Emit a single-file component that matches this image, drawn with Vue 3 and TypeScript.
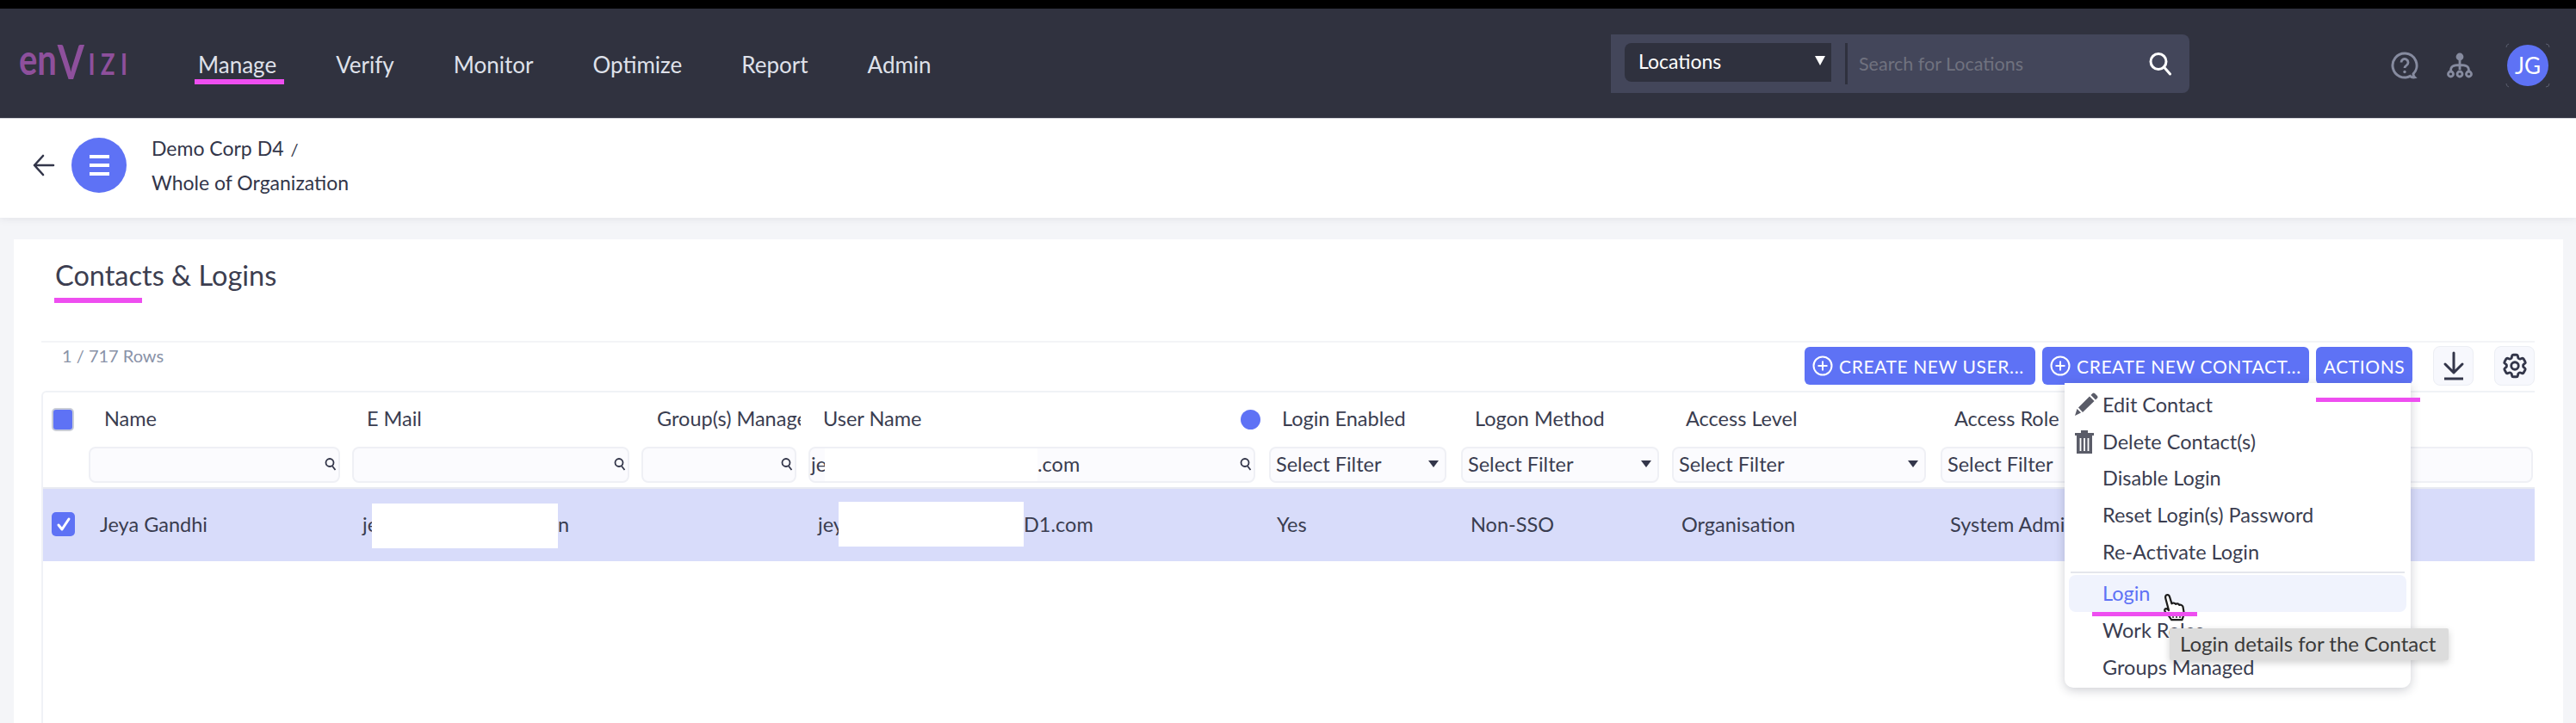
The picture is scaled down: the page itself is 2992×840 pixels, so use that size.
<script setup lang="ts">
const navItems: string[] = ['Manage', 'Verify', 'Monitor', 'Optimize', 'Report', 'Admin']
const menuTop: string[] = ['Disable Login', 'Reset Login(s) Password', 'Re-Activate Login']
</script>

<template>
  <div class="page">
    <div class="blackbar"></div>
    <nav class="nav">
      <svg class="logo" width="132" height="42" viewBox="0 0 132 42">
        <text transform="translate(0 34) scale(0.8 1)" class="logo-text"><tspan class="lower">en</tspan><tspan class="tall" dx="1" dy="5">V</tspan><tspan class="caps" dx="6" dy="-5">IZI</tspan></text>
      </svg>
      <div class="nav-items">
        <a v-for="(n, i) in navItems" :key="n" class="nav-item" :class="{ active: i === 0 }">{{ n }}</a>
      </div>
      <div class="search">
        <div class="loc-select">
          <span>Locations</span>
          <i class="caret white"></i>
        </div>
        <div class="search-div"></div>
        <span class="placeholder">Search for Locations</span>
        <svg class="search-ico" width="28" height="28" viewBox="0 0 28 28" fill="none" stroke="#fff" stroke-width="3" stroke-linecap="round">
          <circle cx="12" cy="11.5" r="9" />
          <path d="M18.5 18l7 8" />
        </svg>
      </div>
      <div class="nav-icons">
        <svg width="32" height="32" viewBox="0 0 32 32" fill="none" stroke="#868b9f" stroke-width="3">
          <path d="M16 2a14 14 0 1 0 6.500 26.400c1.200 1.300 3 1.700 5 1.400-1-1-1.600-2.600-1.500-4A14 14 0 0 0 16 2z" />
          <path d="M12 12.500a4 4 0 1 1 6.200 3.300c-1.500 1-2.200 1.700-2.200 3.200" stroke-width="2.800" />
          <circle cx="16" cy="23.500" r="1.700" fill="#868b9f" stroke="none" />
        </svg>
        <svg class="org" width="30" height="30" viewBox="0 0 30 30" fill="none" stroke="#868b9f" stroke-width="2.800">
          <circle cx="15" cy="5" r="4.400" fill="#868b9f" stroke="none" />
          <path d="M15 8v12M4.500 21c0-5 3-6.500 10.500-6.500s10.500 1.500 10.500 6.500" />
          <circle cx="4.500" cy="25" r="3" />
          <circle cx="15" cy="25" r="3" />
          <circle cx="25.500" cy="25" r="3" />
        </svg>
        <div class="avatar">
          JG
          <svg class="corners" width="52" height="52" viewBox="0 0 52 52" fill="none" stroke="#5a5d6e" stroke-width="1">
            <path d="M1 5a4 4 0 0 1 3-4M47 1a4 4 0 0 1 4 4M51 47a4 4 0 0 1-4 4M4 51a4 4 0 0 1-3-4" />
          </svg>
        </div>
      </div>
    </nav>

    <header class="crumbs">
      <svg class="back" width="26" height="26" viewBox="0 0 26 26" fill="none" stroke="#33364a" stroke-width="2.600" stroke-linecap="round" stroke-linejoin="round">
        <path d="M24 13H2M12 2L2 13l10 11" />
      </svg>
      <div class="crumb-btn">
        <span></span><span></span><span></span>
      </div>
      <div class="crumb-text">
        <div>Demo Corp D4 <span class="slash">/</span></div>
        <div>Whole of Organization</div>
      </div>
    </header>

    <main class="main">
      <section class="card">
        <div class="title-wrap">
          <h1 class="title">Contacts &amp; Logins</h1>
        </div>
        <div class="toolbar">
          <span class="count">1 / 717 Rows</span>
          <div class="tools">
            <button class="btn w-user">
              <svg width="24" height="24" viewBox="0 0 24 24" fill="none" stroke="#fff" stroke-width="2"><circle cx="12" cy="12" r="10.500" /><path d="M12 6.500v11M6.500 12h11" /></svg>
              CREATE NEW USER...
            </button>
            <button class="btn w-contact">
              <svg width="24" height="24" viewBox="0 0 24 24" fill="none" stroke="#fff" stroke-width="2"><circle cx="12" cy="12" r="10.500" /><path d="M12 6.500v11M6.500 12h11" /></svg>
              CREATE NEW CONTACT...
            </button>
            <button class="btn w-actions">ACTIONS</button>
            <button class="icon-btn dl">
              <svg width="28" height="34" viewBox="0 0 28 34" fill="none" stroke="#33364a" stroke-width="3" stroke-linecap="round" stroke-linejoin="round">
                <path d="M14 2v23M4 15l10 10 10-10" /><path d="M3 32h22" stroke-linecap="butt" />
              </svg>
            </button>
            <button class="icon-btn">
              <svg width="34" height="34" viewBox="0 0 24 24" fill="none" stroke="#33364a" stroke-width="2" stroke-linejoin="round">
                <circle cx="12" cy="12" r="3" />
                <path d="M9.594 3.940c.09-.542.56-.94 1.110-.94h2.593c.55 0 1.020.398 1.110.94l.213 1.281c.063.374.313.686.645.870.074.04.147.083.22.127.324.196.72.257 1.075.124l1.217-.456a1.125 1.125 0 011.370.49l1.296 2.247a1.125 1.125 0 01-.26 1.431l-1.003.827c-.293.24-.438.613-.431.992a6.759 6.759 0 010 .255c-.007.378.138.75.43.99l1.005.828c.424.35.534.954.26 1.430l-1.298 2.247a1.125 1.125 0 01-1.369.491l-1.217-.456c-.355-.133-.75-.072-1.076.124a6.570 6.570 0 01-.22.128c-.331.183-.581.495-.644.869l-.213 1.280c-.09.543-.56.941-1.110.941h-2.594c-.55 0-1.020-.398-1.110-.94l-.213-1.281c-.062-.374-.312-.686-.644-.87a6.520 6.520 0 01-.22-.127c-.325-.196-.72-.257-1.076-.124l-1.217.456a1.125 1.125 0 01-1.369-.49l-1.297-2.247a1.125 1.125 0 01.26-1.431l1.004-.827c.292-.24.437-.613.43-.992a6.932 6.932 0 010-.255c.007-.378-.138-.75-.43-.99l-1.004-.828a1.125 1.125 0 01-.26-1.430l1.297-2.247a1.125 1.125 0 011.370-.491l1.216.456c.356.133.751.072 1.076-.124.072-.044.146-.087.22-.128.332-.183.582-.495.644-.869l.214-1.281z" />
              </svg>
            </button>
          </div>
        </div>

        <div class="table">
          <div class="grid head">
            <div class="cell"><i class="hcheck"></i></div>
            <div class="cell hname">Name</div>
            <div class="cell hemail">E Mail</div>
            <div class="cell hgroup"><span class="clip">Group(s) Managed</span></div>
            <div class="cell huser">
              <span>User Name</span>
              <i class="dot"></i>
            </div>
            <div class="cell hlogin">Login Enabled</div>
            <div class="cell hmethod">Logon Method</div>
            <div class="cell hlevel">Access Level</div>
            <div class="cell hrole">Access Role</div>
          </div>
          <div class="grid filters">
            <div></div>
            <div class="field f-name"><svg class="mini" width="14" height="16" viewBox="0 0 14 16" fill="none" stroke="#33364a" stroke-width="1.800"><circle cx="6" cy="6.500" r="4.500" /><path d="M9 10.500l3.500 4.500" /></svg></div>
            <div class="field f-email"><svg class="mini" width="14" height="16" viewBox="0 0 14 16" fill="none" stroke="#33364a" stroke-width="1.800"><circle cx="6" cy="6.500" r="4.500" /><path d="M9 10.500l3.500 4.500" /></svg></div>
            <div class="field f-group"><svg class="mini" width="14" height="16" viewBox="0 0 14 16" fill="none" stroke="#33364a" stroke-width="1.800"><circle cx="6" cy="6.500" r="4.500" /><path d="M9 10.500l3.500 4.500" /></svg></div>
            <div class="field f-user">
              <span>jey</span><span class="dotcom">.com</span>
              <i class="redact r-filter"></i>
              <svg class="mini" width="14" height="16" viewBox="0 0 14 16" fill="none" stroke="#33364a" stroke-width="1.800"><circle cx="6" cy="6.500" r="4.500" /><path d="M9 10.500l3.500 4.500" /></svg>
            </div>
            <div class="field sel f-login"><span>Select Filter</span><i class="caret"></i></div>
            <div class="field sel f-method"><span>Select Filter</span><i class="caret"></i></div>
            <div class="field sel f-level"><span>Select Filter</span><i class="caret"></i></div>
            <div class="field sel f-role"><span>Select Filter</span></div>
          </div>
          <div class="grid row">
            <div class="cell"><i class="rcheck"><svg width="18" height="18" viewBox="0 0 18 18" fill="none" stroke="#fff" stroke-width="3" stroke-linecap="round" stroke-linejoin="round"><path d="M3 10l4 5 8-12" /></svg></i></div>
            <div class="cell rname">Jeya Gandhi</div>
            <div class="cell remail">je<i class="redact r-email"></i><span class="tail-n">n</span></div>
            <div class="cell"></div>
            <div class="cell ruser">jey<i class="redact r-user"></i><span class="tail-d">D1.com</span></div>
            <div class="cell rlogin">Yes</div>
            <div class="cell rmethod">Non-SSO</div>
            <div class="cell rlevel">Organisation</div>
            <div class="cell rrole">System Admin</div>
          </div>
        </div>

        <div class="actions-mark"></div>
        <div class="menu">
          <div class="mi">
            <svg class="mi-ico" width="28" height="28" viewBox="0 0 28 28"><path d="M1 27l2.500-8L8 23.500z" fill="#5a5c68" /><path d="M5 17.500L18 4.500l5.500 5.500L10 23z" fill="#5a5c68" /><path d="M19.500 3l2-2a2 2 0 0 1 2.500 0l3 3a2 2 0 0 1 0 2.500l-2 2z" fill="#5a5c68" /></svg>
            Edit Contact
          </div>
          <div class="mi">
            <svg class="mi-ico" width="24" height="30" viewBox="0 0 24 30"><path d="M1 5h22v3H1zM8 2h8v3H8z" fill="#5a5c68" /><path d="M3 8h18v21H3z" fill="#5a5c68" /><path d="M7.500 11v15M12 11v15M16.500 11v15" stroke="#fff" stroke-width="1.800" /></svg>
            Delete Contact(s)
          </div>
          <div v-for="m in menuTop" :key="m" class="mi">{{ m }}</div>
          <div class="mi-sep"></div>
          <div class="mi hl">Login</div>
          <div class="mi">Work Roles</div>
          <div class="mi">Groups Managed</div>
        </div>
        <svg class="hand" width="32" height="34" viewBox="0 0 32 34" fill="#fff" stroke="#1c1c1c" stroke-width="2.200" stroke-linejoin="round">
          <path d="M6 2.500c1.800-1 3.400 0 4 1.800l2.500 8c.8-1.200 3.800-1 4.500.6 1-1 3.600-.8 4.200 1 1.200-.6 3.800 0 4.300 2.200l1 6c.5 3-.5 5-2 9H12c-1.500-3-4-6-7-9-1.500-2-.8-4 1-4 1 0 2.200.8 3 2L5.500 7c-.6-2-.6-3.600.5-4.500z" />
          <path d="M14 24v5M18 24v5M22 24v5" stroke-width="1.400" />
        </svg>
        <div class="login-mark"></div>
        <div class="tooltip">Login details for the Contact</div>
      </section>
    </main>
  </div>
</template>

<style>
html, body { margin: 0; padding: 0; background: #f4f5f8; }
</style>

<style scoped>
* { box-sizing: border-box; }
.page {
  width: 2992px;
  height: 840px;
  overflow: hidden;
  background: #f4f5f8;
  font-family: "Lato", "Open Sans", sans-serif;
  color: #3a3d50;
  font-size: 23.500px;
}
.blackbar { height: 10px; background: #000; }
.nav {
  height: 128px;
  background: #30323f;
  display: flex;
  align-items: flex-start;
  border-bottom: 1px solid #d8d9de;
  position: relative;
}
.logo { margin: 43px 0 0 22px; flex: none; overflow: visible; }
.logo-text { font-family: "Lato", sans-serif; font-weight: 700; fill: #8e509c; }
.lower { font-size: 50px; }
.tall { font-size: 56px; }
.caps { font-size: 34px; letter-spacing: 8px; }
.nav-items { display: flex; margin-left: 76px; flex: none; }
.nav-item {
  color: #dfe1ea;
  font-size: 26px;
  padding: 49px 0 0;
  height: 98px;
  margin-right: 69px;
  position: relative;
}
.nav-item.active::after {
  content: "";
  position: absolute;
  left: -4px;
  width: 104px;
  top: 82px;
  height: 6px;
  background: #ee4ef0;
}
.search {
  position: absolute;
  left: 1871px;
  top: 30px;
  width: 672px;
  height: 68px;
  background: #43465a;
  border-radius: 0 8px 8px 0;
  display: flex;
  align-items: flex-start;
}
.loc-select {
  margin: 10px 0 0 16px;
  width: 240px;
  height: 45px;
  background: #2f313e;
  border-radius: 8px 0 0 8px;
  color: #fff;
  font-size: 23px;
  display: flex;
  align-items: center;
  justify-content: space-between;
  padding: 0 7px 4px 16px;
}
.search-div { width: 3px; height: 48px; background: #2f313e; margin: 10px 0 0 16px; }
.placeholder { color: #70727f; font-size: 21.500px; margin: 21px 0 0 13px; flex: 1; }
.search-ico { margin: 20px 20px 0 0; }
.nav-icons {
  position: absolute;
  left: 2777px;
  top: 42px;
  display: flex;
  align-items: center;
}
.org { margin-left: 33px; }
.avatar {
  width: 48px;
  height: 48px;
  border-radius: 50%;
  background: #5e72f5;
  color: #fff;
  font-size: 26px;
  display: flex;
  align-items: center;
  justify-content: center;
  margin-left: 40px;
  position: relative;
}
.corners { position: absolute; left: -2px; top: -2px; }
.caret { width: 0; height: 0; border: 6px solid transparent; border-top: 8px solid #33364a; border-bottom: 0; display: block; }
.caret.white { border-top-color: #fff; border-left-width: 6px; border-right-width: 6px; border-top-width: 11px; }

.crumbs {
  height: 115px;
  background: #fff;
  display: flex;
  align-items: center;
  padding: 0 0 8px 38px;
  box-shadow: 0 2px 8px rgba(50, 55, 80, 0.08);
  position: relative;
}
.back { flex: none; }
.crumb-btn {
  width: 64px;
  height: 64px;
  border-radius: 50%;
  background: #5e72f5;
  margin-left: 19px;
  display: flex;
  flex-direction: column;
  align-items: center;
  justify-content: center;
  gap: 6px;
}
.crumb-btn span { width: 23px; height: 4px; background: #fff; }
.crumb-text { margin-left: 29px; display: flex; flex-direction: column; gap: 9px; line-height: 30px; color: #33364a; font-size: 23px; }
.slash { margin-left: 2px; font-size: 20px; }

.main { padding: 25px 15px 0 16px; }
.card {
  background: #fff;
  height: 562px;
  padding: 0 33px 0 32px;
  position: relative;
}
.title-wrap { height: 118px; padding: 0 0 0 16px; }
.title {
  margin: 0;
  display: inline-block;
  font-weight: 400;
  font-size: 32.500px;
  color: #3c3e50;
  line-height: 42px;
  padding-top: 21px;
}
.title::after {
  content: "";
  display: block;
  width: 102px;
  height: 6px;
  background: #ee4ef0;
  margin: 5px 0 0 -1px;
}
.toolbar {
  border-top: 2px solid #f3f4f7;
  height: 58px;
  display: flex;
  align-items: flex-start;
  justify-content: space-between;
}
.count { color: #8a93a8; font-size: 20px; margin: 1px 0 0 24px; line-height: 28px; }
.tools { display: flex; align-items: flex-start; margin-top: 5px; }
.btn {
  border: 0;
  height: 44px;
  border-radius: 6px;
  background: #5e72f5;
  color: #fff;
  font-family: inherit;
  font-size: 21px;
  letter-spacing: 0.600px;
  display: flex;
  align-items: center;
  gap: 7px;
  padding: 0 0 0 9px;
  margin-right: 8px;
  white-space: nowrap;
}
.w-user { width: 268px; }
.w-contact { width: 310px; }
.w-actions { width: 112px; margin-right: 24px; justify-content: center; padding: 0; }
.icon-btn {
  width: 47px;
  height: 46px;
  margin-top: -1px;
  background: #f7f8fd;
  border: 1px solid #eceef4;
  border-radius: 8px;
  display: flex;
  align-items: center;
  justify-content: center;
  padding: 0;
}
.dl { margin-right: 24px; }

.table {
  border-top: 2px solid #f0f2f6;
  border-left: 2px solid #f0f2f6;
  border-radius: 6px 0 0 0;
  height: 386px;
}
.grid {
  display: grid;
  grid-template-columns: 53px 306px 336px 194px 535px 223px 245px 312px 688px;
}
.cell { display: flex; align-items: center; white-space: nowrap; position: relative; min-width: 0; }
.head { height: 62px; }
.head .cell { padding-bottom: 3px; }
.hcheck {
  display: block;
  width: 26px;
  height: 27px;
  margin-left: 10px;
  margin-top: 3px;
  background: #5e72f5;
  border: 2px solid #c9cdd8;
  border-radius: 5px;
}
.hname { padding-left: 18px; }
.hemail { padding-left: 17px; }
.hgroup { padding-left: 18px; }
.clip { display: block; width: 167px; overflow: hidden; }
.huser { padding-left: 17px; justify-content: space-between; padding-right: 10px; }
.dot { display: block; width: 23px; height: 23px; border-radius: 50%; background: #5e72f5; margin-top: 3px; }
.hlogin { padding-left: 15px; }
.hmethod { padding-left: 16px; }
.hlevel { padding-left: 16px; }
.hrole { padding-left: 16px; }
.filters { height: 50px; border-bottom: 2px solid #e8eaf1; }
.field {
  height: 42px;
  background: #fbfbfe;
  border: 2px solid #eff0f5;
  border-radius: 8px;
  display: flex;
  align-items: center;
  padding: 0 2px 2px 0;
  justify-content: flex-end;
  position: relative;
  white-space: nowrap;
  margin-top: 1px;
}
.f-name { width: 292px; }
.f-email { width: 322px; }
.f-group { width: 180px; }
.f-user { width: 519px; justify-content: flex-start; }
.f-user span:first-child { margin-left: 1px; }
.dotcom { position: absolute; left: 264px; }
.f-user .mini { margin-left: auto; }
.f-login { width: 206px; }
.f-method { width: 230px; }
.f-level { width: 295px; }
.f-role { width: 688px; }
.sel { justify-content: space-between; padding: 0 7px 2px 6px; }
.row { height: 84px; background: #d8dcfa; }
.row .cell { padding-bottom: 2px; }
.rcheck {
  display: flex;
  align-items: center;
  justify-content: center;
  width: 27px;
  height: 28px;
  margin-left: 10px;
  border-radius: 5px;
  background: #5e72f5;
}
.rname { padding-left: 13px; }
.remail { padding-left: 12px; }
.ruser { padding-left: 11px; }
.rlogin { padding-left: 9px; }
.rmethod { padding-left: 11px; }
.rlevel { padding-left: 11px; }
.rrole { padding-left: 11px; }
.redact { position: absolute; background: #fff; display: block; }
.r-email { left: 23px; width: 216px; height: 52px; top: 17px; }
.tail-n { position: absolute; left: 239px; }
.r-user { left: 35px; width: 215px; height: 52px; top: 15px; }
.tail-d { position: absolute; left: 250px; }
.r-filter { left: 17px; width: 247px; height: 38px; top: 0; }

.actions-mark {
  position: absolute;
  left: 2674px;
  top: 184px;
  width: 121px;
  height: 5px;
  background: #ee4ef0;
  z-index: 3;
}
.menu {
  position: absolute;
  left: 2382px;
  top: 167px;
  width: 402px;
  height: 354px;
  background: #fff;
  border-radius: 0 0 10px 10px;
  box-shadow: 0 3px 12px rgba(30, 35, 60, 0.22);
  padding: 4px 5px 0;
  z-index: 2;
}
.mi {
  height: 42.600px;
  display: flex;
  align-items: center;
  padding-left: 39px;
  position: relative;
  color: #3a3d50;
  white-space: nowrap;
}
.mi-ico { position: absolute; left: 6px; top: 50%; transform: translateY(-50%); }
.mi-sep { height: 2px; background: #e4e6ec; margin: 2px 0 2px 2px; width: 388px; }
.hl { background: #f0f3fd; color: #5e72f5; border-radius: 8px; height: 43px; }
.login-mark {
  position: absolute;
  left: 2414px;
  top: 433px;
  width: 122px;
  height: 5px;
  background: #ee4ef0;
  z-index: 5;
}
.hand { position: absolute; left: 2494px; top: 411px; z-index: 4; }
.tooltip {
  position: absolute;
  left: 2504px;
  top: 452px;
  width: 324px;
  height: 37px;
  background: #dcdcdc;
  color: #3a3a3a;
  font-size: 24px;
  line-height: 36px;
  padding-left: 12px;
  border-radius: 2px;
  box-shadow: 0 3px 8px rgba(0, 0, 0, 0.18);
  white-space: nowrap;
  z-index: 6;
}
</style>
